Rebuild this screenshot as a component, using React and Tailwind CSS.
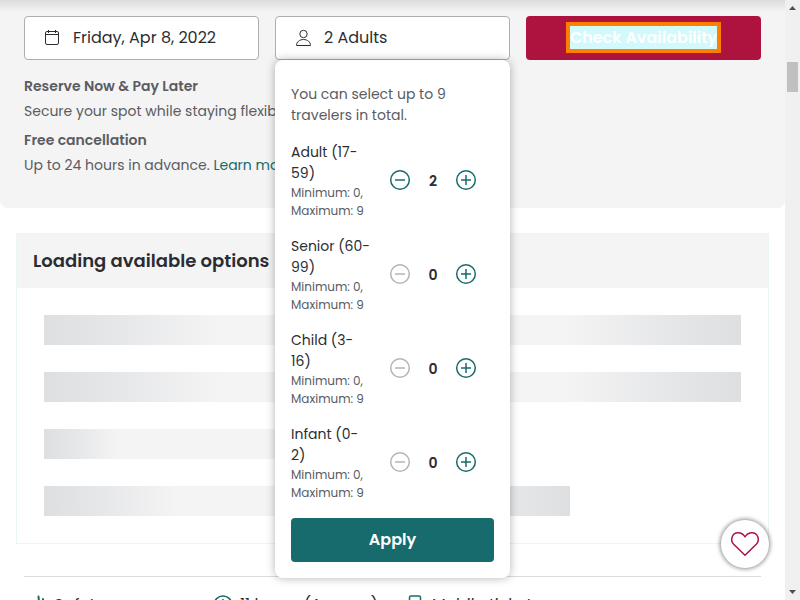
import React, { useState } from "react";

const FIELD =
  "flex h-11 w-full items-center gap-2 rounded border border-[#adaeb3] bg-white px-4 text-left text-base leading-6 text-[#2b2d32]";

const TRAVELERS = [
  { id: "adult", name: "Adult", from: 17, to: 59, start: 2 },
  { id: "senior", name: "Senior", from: 60, to: 99, start: 0 },
  { id: "child", name: "Child", from: 3, to: 16, start: 0 },
  { id: "infant", name: "Infant", from: 0, to: 2, start: 0 },
];

function CalendarIcon() {
  return (
    <svg className="size-6 shrink-0" viewBox="0 0 24 24" fill="none" stroke="currentColor" aria-hidden="true">
      <rect x="4.5" y="5.5" width="13" height="13" rx="1.5" />
      <path d="M4.5 8.5h13M7.5 4v3M14.5 4v3" />
    </svg>
  );
}

function PersonIcon() {
  return (
    <svg className="size-6 shrink-0" viewBox="0 0 24 24" fill="none" stroke="currentColor" aria-hidden="true">
      <circle cx="11.5" cy="8" r="3.7" />
      <path d="M4.5 19.5c0-3.500 3-6 7-6s7 2.500 7 6z" strokeLinejoin="round" />
    </svg>
  );
}

function StepIcon({ plus }) {
  return (
    <svg className="size-6" viewBox="0 0 24 24" fill="none" stroke="currentColor" strokeWidth="1.5" aria-hidden="true">
      <circle cx="12" cy="11" r="9.300" />
      <path d={plus ? "M7 11h10M12 6v10" : "M7 11h10"} />
    </svg>
  );
}

function TravelerRow({ id, name, from, to, start }) {
  const [count, setCount] = useState(start);
  return (
    <div className="flex items-center gap-[17px]" role="group" aria-labelledby={id}>
      <div className="w-20 shrink-0">
        <div id={id} className="text-sm leading-[21px] whitespace-nowrap text-[#2b2d32]">
          {name} ({from}-<br />
          {to})
        </div>
        <div className="text-xs leading-[18px] text-[#5a5c63]">Minimum: 0, Maximum: 9</div>
      </div>
      <div className="flex items-center">
        <button
          type="button"
          aria-label="Decrease"
          disabled={count === 0}
          onClick={() => setCount(count - 1)}
          className="text-[#186b6d] disabled:text-[#b4b5b8]"
        >
          <StepIcon />
        </button>
        <span className="w-[42px] text-center text-sm font-semibold text-[#2b2d32]">{count}</span>
        <button type="button" aria-label="Increase" onClick={() => setCount(Math.min(9, count + 1))} className="text-[#186b6d]">
          <StepIcon plus />
        </button>
      </div>
    </div>
  );
}

function TravelerMenu() {
  return (
    <div className="absolute inset-x-0 top-full z-10 flex flex-col gap-4 rounded-lg bg-white p-4 pt-6 shadow-[0_0_10px_rgba(0,0,0,0.3)]">
      <p className="text-sm leading-[21px] text-[#5a5c63]">You can select up to 9 travelers in total.</p>
      {TRAVELERS.map((t) => (
        <TravelerRow key={t.id} {...t} />
      ))}
      <button type="button" className="h-11 rounded bg-[#186b6d] text-base font-semibold text-white">
        Apply
      </button>
    </div>
  );
}

function Booking() {
  return (
    <section className="rounded-b-lg bg-[#f4f4f4] px-6 pt-4 pb-8">
      <div className="grid grid-cols-3 gap-4">
        <button type="button" className={FIELD}>
          <CalendarIcon />
          <span className="truncate">Friday, Apr 8, 2022</span>
        </button>
        <div className="relative">
          <button type="button" className={FIELD} aria-expanded="true">
            <PersonIcon />
            <span>2 Adults</span>
          </button>
          <TravelerMenu />
        </div>
        <button type="button" className="h-11 rounded bg-[#ae133f] text-base leading-6 font-semibold text-white">
          <span className="bg-[#d2f9fb] outline-4 outline-[#ff7f00]">Check Availability</span>
        </button>
      </div>
      <div className="mt-4 flex flex-col gap-2 text-sm leading-[21px] text-[#5a5c63]">
        <div className="flex flex-col gap-1">
          <h3 className="font-semibold">Reserve Now &amp; Pay Later</h3>
          <p>Secure your spot while staying flexible</p>
        </div>
        <div className="flex flex-col gap-1">
          <h3 className="font-semibold">Free cancellation</h3>
          <p>
            Up to 24 hours in advance. <a href="#learn" className="text-[#186b6d]">Learn more</a>
          </p>
        </div>
      </div>
    </section>
  );
}

const BAR =
  "h-[30px] bg-[linear-gradient(90deg,#dedfe1_0%,#e6e7e9_11%,#f4f4f4_25%,#f4f4f4_75%,#e6e7e9_89%,#dedfe1_100%)]";

function LoadingCard() {
  return (
    <section className="mx-4 mt-[25px] border border-[#ebf5f4]">
      <h2 className="flex h-[54px] items-center bg-[#f4f4f4] px-4 text-lg font-semibold text-[#2b2d32]">
        Loading available options
      </h2>
      <div className="flex flex-col gap-[27px] p-[27px]">
        <div className={BAR} />
        <div className={BAR} />
        <div className={`${BAR} w-[300px] max-w-full`} />
        <div className={`${BAR} w-[526px] max-w-full`} />
      </div>
    </section>
  );
}

function Features() {
  const item = "flex items-center gap-1.5";
  return (
    <ul className="mx-6 mt-8 flex gap-x-6 border-t border-[#dadbdd] pt-4 text-base leading-6 text-[#2b2d32]">
      <li className={`${item} w-[162px]`}>
        <svg className="size-6 shrink-0 text-[#186b6d]" viewBox="0 0 24 24" fill="none" stroke="currentColor" strokeWidth="2" strokeLinecap="round" aria-hidden="true">
          <path d="M14.500 3.500 15 9M19 6v5M15 9l-4 5 2 7h6V11" />
        </svg>
        Safety
      </li>
      <li className={`${item} w-[168px]`}>
        <svg className="size-6 shrink-0 text-[#186b6d]" viewBox="0 0 24 24" fill="none" stroke="currentColor" strokeWidth="1.5" aria-hidden="true">
          <circle cx="13" cy="12" r="9" />
          <path d="M13 6v6l4 2" />
        </svg>
        11 hours (Approx.)
      </li>
      <li className={item}>
        <svg className="size-6 shrink-0 text-[#186b6d]" viewBox="0 0 24 24" fill="none" stroke="currentColor" strokeWidth="1.5" aria-hidden="true">
          <rect x="7.500" y="3" width="11" height="18" rx="1.500" />
        </svg>
        Mobile ticket
      </li>
    </ul>
  );
}

function ScrollRail() {
  return (
    <div className="flex w-[15px] shrink-0 flex-col items-center justify-between bg-[#f0f0f0] py-1.5" aria-hidden="true">
      <div className="flex w-full flex-col items-center gap-[52px]">
        <svg className="h-1 w-[7px]" viewBox="0 0 7 4" fill="#505050">
          <path d="M3.500 0 7 4H0z" />
        </svg>
        <div className="h-[30px] w-[11px] bg-[#c0c0c0]" />
      </div>
      <svg className="h-1 w-[7px]" viewBox="0 0 7 4" fill="#505050">
        <path d="M3.500 4 7 0H0z" />
      </svg>
    </div>
  );
}

export default function App() {
  return (
    <div className="flex h-screen overflow-hidden bg-white font-[Poppins,Inter,sans-serif]">
      <main className="relative min-w-0 flex-1 overflow-hidden">
        <div className="absolute inset-x-0 top-0 h-3 bg-linear-to-b from-black/10 to-transparent" />
        <Booking />
        <LoadingCard />
        <Features />
        <button
          type="button"
          aria-label="Save to wishlist"
          className="fixed right-[31px] bottom-[32px] flex size-12 items-center justify-center rounded-full bg-white text-[#ae133f] shadow-[0_0_4px_1px_rgba(0,0,0,0.45)]"
        >
          <svg className="size-8" viewBox="0 0 32 32" fill="none" stroke="currentColor" strokeWidth="1.500" strokeLinejoin="round" aria-hidden="true">
            <path d="M16 27.300 4.700 16.200C.8 12.200 3 4.700 9 4.700c2.800 0 5.200 1.300 7 4.100 1.800-2.800 4.200-4.100 7-4.100 6 0 8.200 7.500 4.300 11.500z" />
          </svg>
        </button>
      </main>
      <ScrollRail />
    </div>
  );
}
